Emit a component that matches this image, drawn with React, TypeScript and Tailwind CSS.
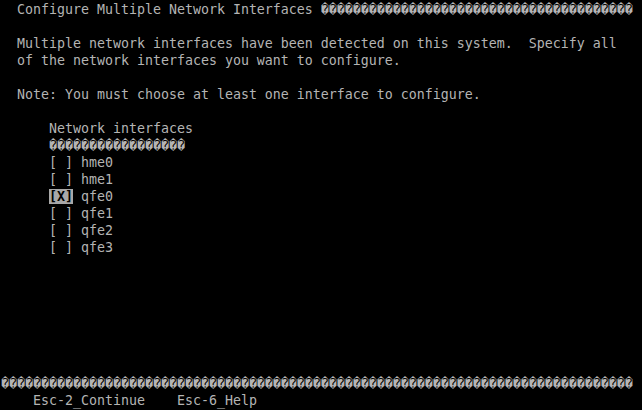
const bad = (n: number) => "\uFFFD".repeat(n);

const items = [
  { name: "hme0", checked: false },
  { name: "hme1", checked: false },
  { name: "qfe0", checked: true },
  { name: "qfe1", checked: false },
  { name: "qfe2", checked: false },
  { name: "qfe3", checked: false },
];

function Row({ children }: { children?: React.ReactNode }) {
  return <div className="h-[17px] whitespace-pre">{children ?? " "}</div>;
}

export default function App() {
  return (
    <div
      className="w-[642px] h-[410px] bg-black text-[#b4b4b4] text-[13.29px] leading-[17px] pt-[1px] pl-[1px] overflow-hidden"
      style={{ fontFamily: '"DejaVu Sans Mono", "Liberation Mono", monospace' }}
    >
      <Row>{"  Configure Multiple Network Interfaces " + bad(39)}</Row>
      <Row />
      <Row>{"  Multiple network interfaces have been detected on this system.  Specify all"}</Row>
      <Row>{"  of the network interfaces you want to configure."}</Row>
      <Row />
      <Row>{"  Note: You must choose at least one interface to configure."}</Row>
      <Row />
      <Row>{"      Network interfaces"}</Row>
      <Row>{"      " + bad(17)}</Row>
      {items.map((it) => (
        <Row key={it.name}>
          {"      "}
          {it.checked ? (
            <span className="bg-[#a8a8a8] text-black font-bold">[X]</span>
          ) : (
            "[ ]"
          )}
          {" " + it.name}
        </Row>
      ))}
      <Row />
      <Row />
      <Row />
      <Row />
      <Row />
      <Row />
      <Row />
      <Row>{bad(79)}</Row>
      <Row>{"    Esc-2_Continue    Esc-6_Help"}</Row>
    </div>
  );
}
